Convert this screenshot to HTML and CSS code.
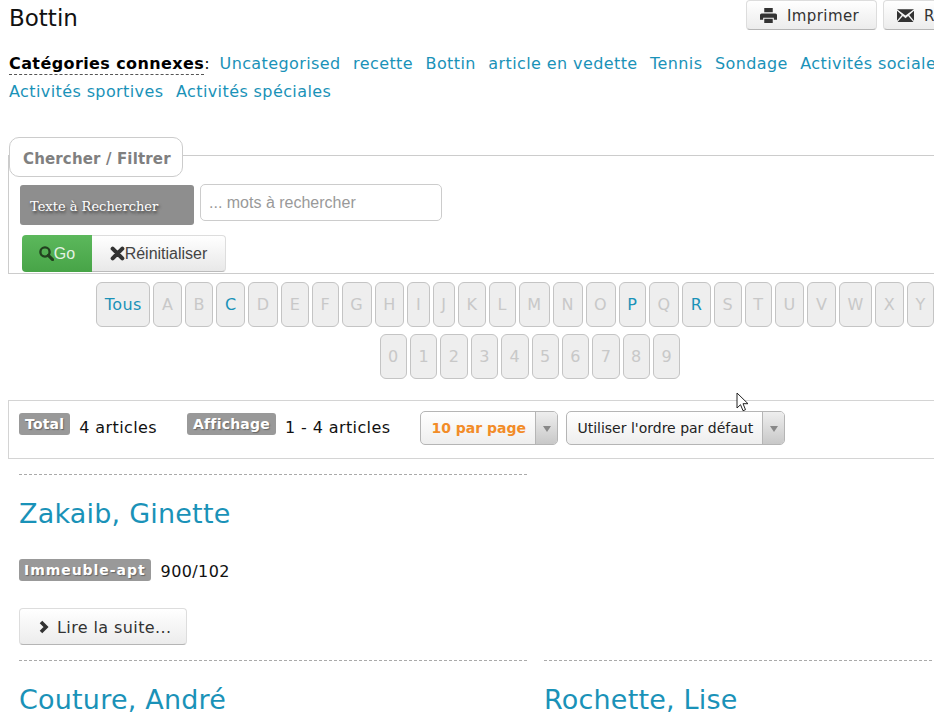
FILE: index.html
```html
<!DOCTYPE html>
<html lang="fr">
<head>
  <meta charset="UTF-8">
  <meta name="viewport" content="width=device-width, initial-scale=1.0">
  <title>Bottin</title>
  <link rel="stylesheet" href="styles.css">
</head>
<body>
  <div class="page">
    <div class="head">
      <h1>Bottin</h1>
      <div class="head-btns">
        <a class="btn head-btn">
          <svg class="ico-16" viewBox="0 0 16 16"><path fill="#333" d="M4 1h8v4H4zM1.500 6h13a1.500 1.500 0 0 1 1.500 1.500V12h-3v-2H3v2H0V7.500A1.500 1.500 0 0 1 1.500 6zM4 11h8v4H4z"/></svg>
          Imprimer
        </a>
        <a class="btn head-btn wide">
          <svg class="ico-16" viewBox="0 0 16 16"><path fill="#333" d="M0 2h16l-8 6zM0 3.500l4.500 4L0 13zM16 3.500V13l-4.500-5.500zM5.500 8.500L8 10.500l2.500-2 5 5.500H.5z"/></svg>
          Recommander
        </a>
      </div>
    </div>

    <div class="cats">
      <span class="cats-title">Catégories connexes</span><span class="cats-sep">:</span>
      <a>Uncategorised</a>
      <a>recette</a>
      <a>Bottin</a>
      <a>article en vedette</a>
      <a>Tennis</a>
      <a>Sondage</a>
      <a>Activités sociales</a>
      <a>Activités sportives</a>
      <a>Activités spéciales</a>
    </div>

    <div class="filter">
      <div class="filter-title">Chercher / Filtrer</div>
      <div class="search-row">
        <label class="search-label">Texte à Rechercher</label>
        <input class="search-input" type="text" placeholder="... mots à rechercher">
      </div>
      <div class="search-btns">
        <a class="go">
          <svg class="ico-15" viewBox="0 0 14 14"><circle cx="5.600" cy="5.600" r="4.300" fill="none" stroke="#22401f" stroke-width="2.200"/><path d="M8.700 8.700l4 4" stroke="#22401f" stroke-width="2.800" stroke-linecap="round"/></svg>Go
        </a>
        <a class="reset">
          <svg class="ico-15" viewBox="0 0 14 14"><path d="M2.500 2.500l9 9M11.500 2.500l-9 9" stroke="#333" stroke-width="3.800" stroke-linecap="round"/></svg>Réinitialiser
        </a>
      </div>
    </div>

    <div class="alpha letters">
      <a class="on">Tous</a><a>A</a><a>B</a><a class="on">C</a><a>D</a><a>E</a><a>F</a><a>G</a><a>H</a><a>I</a><a>J</a><a>K</a><a>L</a><a>M</a><a>N</a><a>O</a><a class="on">P</a><a>Q</a><a class="on">R</a><a>S</a><a>T</a><a>U</a><a>V</a><a>W</a><a>X</a><a>Y</a><a>Z</a>
    </div>
    <div class="alpha">
      <a>0</a><a>1</a><a>2</a><a>3</a><a>4</a><a>5</a><a>6</a><a>7</a><a>8</a><a>9</a>
    </div>

    <div class="stats">
      <span class="pill">Total</span>
      <span class="stat-val">4 articles</span>
      <span class="pill second">Affichage</span>
      <span class="stat-val">1 - 4 articles</span>
      <div class="select per-page"><span class="select-text">10 par page</span><span class="select-arrow"></span></div>
      <div class="select order"><span class="select-text">Utiliser l'ordre par défaut</span><span class="select-arrow"></span></div>
    </div>

    <div class="articles">
      <div class="article">
        <h2>Zakaib, Ginette</h2>
        <div class="field"><span class="pill long">Immeuble-apt</span><span class="field-val">900/102</span></div>
        <a class="btn more">
          <svg class="ico-14" viewBox="0 0 14 14"><path d="M4 2l5 5-5 5" fill="none" stroke="#333" stroke-width="3.600"/></svg>
          <span class="more-text">Lire la suite...</span>
        </a>
      </div>
      <div class="article empty"></div>
      <div class="article">
        <h2>Couture, André</h2>
      </div>
      <div class="article">
        <h2>Rochette, Lise</h2>
      </div>
    </div>
  </div>

  <svg class="cursor" viewBox="0 0 14 21"><path d="M1 1v15l3.500-3.300 2.500 6 2.500-1-2.500-6H12z" fill="#fff" stroke="#222" stroke-width="1"/></svg>
</body>
</html>
```

FILE: styles.css
```css
* { box-sizing: border-box; }
html, body { overflow: hidden; height: 100%; }
body {
  margin: 0;
  background: #fff;
  color: #111;
  font-family: 'DejaVu Sans', Verdana, sans-serif;
  font-size: 16px;
  letter-spacing: 0.4px;
}
a { color: #1a92b8; }
.page { width: 1052px; padding-left: 8px; }

.head {
  display: flex;
  justify-content: space-between;
  height: 50px;
}
h1 {
  margin: 4px 0 0 1px;
  font-size: 23px;
  font-weight: normal;
  line-height: 28px;
  letter-spacing: 0;
  color: #111;
}
.head-btns { display: flex; gap: 6px; }
.btn {
  display: flex;
  align-items: center;
  border: 1px solid #ddd;
  border-bottom-color: #b5b5b5;
  border-radius: 4px;
  background: linear-gradient(#fff, #ececec);
  color: #333;
}
.head-btn { width: 131px; height: 30px; padding: 1px 0 0 13px; gap: 10px; font-size: 15px; }
.head-btn.wide { width: 169px; }
.ico-16 { width: 17px; height: 17px; flex: none; }
.ico-15 { width: 15px; height: 15px; flex: none; }
.ico-14 { width: 14px; height: 14px; flex: none; }

.cats { line-height: 28px; height: 56px; margin-left: 1px; }
.cats a { margin-right: 7px; white-space: nowrap; }
.cats-title { padding-bottom: 1px; font-weight: bold; color: #000; border-bottom: 1px dashed #555; }
.cats-sep { margin-right: 4px; }

.filter {
  margin-top: 49px;
  padding: 0 0 1px 11px;
  border-top: 1px solid #ccc;
  border-left: 1px solid #ccc;
  border-bottom: 1px solid #ccc;
}
.filter-title {
  width: 174px;
  height: 40px;
  margin: -19px 0 0 -11px;
  padding-left: 13px;
  line-height: 42px;
  border: 1px solid #ccc;
  border-radius: 10px;
  background: #fff;
  color: #808080;
  font-size: 15px;
  font-weight: bold;
  letter-spacing: 0.15px;
}
.search-row { display: flex; gap: 6px; align-items: flex-start; margin-top: 7px; letter-spacing: 0; }
.search-label {
  width: 174px;
  height: 40px;
  margin-top: 1px;
  padding-left: 10px;
  line-height: 43px;
  border-radius: 3px;
  background: #8e8e8e;
  color: #fff;
  font-family: 'DejaVu Serif', Georgia, serif;
  font-size: 13px;
  text-shadow: 1px 2px 3px #333;
}
.search-input {
  width: 242px;
  height: 37px;
  padding: 0 8px;
  border: 1px solid #ccc;
  border-radius: 5px;
  font-family: 'Liberation Sans', Arial, sans-serif;
  font-size: 16px;
  outline: none;
}
.search-input::placeholder { color: #999; }
.search-btns { display: flex; margin: 10px 0 0 2px; height: 37px; letter-spacing: 0; }
.go, .reset {
  display: flex;
  align-items: center;
  justify-content: center;
  font-family: 'Liberation Sans', Arial, sans-serif;
  font-size: 16px;
}
.go {
  width: 70px;
  background: linear-gradient(#5cb85c, #47a447);
  border-radius: 4px 0 0 4px;
  color: #e4f2e4;
}
.reset {
  width: 134px;
  background: linear-gradient(#fff, #e8e8e8);
  border: 1px solid #ddd;
  border-left: 0;
  border-bottom-color: #bbb;
  border-radius: 0 4px 4px 0;
  color: #444;
}

.alpha {
  display: flex;
  justify-content: center;
  gap: 3px;
  margin-top: 8px;
}
.alpha + .alpha { margin-top: 7px; }
.alpha a {
  height: 45px;
  padding: 0 7.400px;
  line-height: 43px;
  border: 1px solid #c4c4c4;
  border-radius: 6px;
  background: #eee;
  color: #c8c8c8;
}
.alpha.letters { padding-left: 2px; }
.alpha.letters a { padding: 0 7.600px; }
.alpha a.on { color: #1a92b8; }

.stats {
  display: flex;
  align-items: flex-start;
  height: 59px;
  margin-top: 21px;
  padding: 12px 0 0 10px;
  border: 1px solid #d4d4d4;
  border-right: 0;
}
.pill {
  height: 22px;
  padding: 0 6px;
  border-radius: 3px;
  background: #999;
  color: #fff;
  font-size: 14px;
  font-weight: bold;
  letter-spacing: 0.2px;
  line-height: 22px;
  text-shadow: 1px 1px 1px #666;
}
.pill.second { margin-left: 30px; }
.pill.long { padding: 0 5px; letter-spacing: 0.95px; }
.stat-val { margin-left: 9px; line-height: 29px; }
.select {
  display: flex;
  height: 34px;
  margin-top: -2px;
  border: 1px solid #b5b5b5;
  border-radius: 5px;
  background: linear-gradient(#fff, #eee);
  font-size: 14px;
  letter-spacing: 0;
  overflow: hidden;
}
.select-text { padding: 0 9px 0 10px; line-height: 32px; white-space: nowrap; color: #222; }
.select-arrow {
  position: relative;
  width: 23px;
  border-left: 1px solid #b5b5b5;
  background: linear-gradient(#eee, #c8c8c8);
}
.select-arrow::after {
  content: "";
  position: absolute;
  left: 7px;
  top: 14px;
  border: 4px solid transparent;
  border-top: 6px solid #888;
  border-bottom: 0;
}
.per-page { width: 138px; margin-left: 30px; }
.per-page .select-text { flex: 1; color: #f28c28; font-weight: bold; }
.order { width: 219px; margin-left: 8px; }
.order .select-text { flex: 1; }

.articles {
  display: grid;
  grid-template-columns: 508px 508px;
  column-gap: 17px;
  margin: 15px 0 0 11px;
}
.article { height: 186px; border-top: 1px dashed #aaa; }
.article.empty { border-top: 0; }
h2 {
  margin: 20px 0 0;
  font-size: 27px;
  font-weight: normal;
  line-height: 38px;
  letter-spacing: 0.2px;
  color: #1a92b8;
}
.field { display: flex; align-items: flex-start; margin-top: 26px; height: 49px; }
.field-val { margin-left: 10px; line-height: 25px; }
.more {
  width: 168px;
  height: 37px;
  padding-left: 17px;
  gap: 6px;
  font-size: 16px;
}
.more-text { padding-top: 1px; }

.cursor {
  position: absolute;
  left: 736px;
  top: 392px;
  width: 14px;
  height: 21px;
}
```
